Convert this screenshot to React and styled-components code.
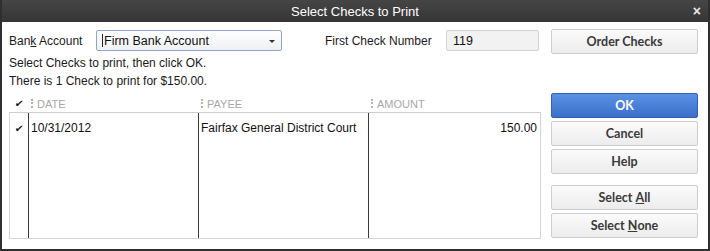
import React from "react";
import styled, { createGlobalStyle } from "styled-components";

const GlobalStyle = createGlobalStyle`
  html, body {
    margin: 0;
    padding: 0;
    background: #ffffff;
  }
  * {
    box-sizing: border-box;
  }
`;

const rows = [
  { checked: true, date: "10/31/2012", payee: "Fairfax General District Court", amount: "150.00" },
];

const App = () => {
  return (
    <>
      <GlobalStyle />
      <Window>
        <TitleBar>
          <span>Select Checks to Print</span>
          <Close>×</Close>
        </TitleBar>
        <Body>
          <Main>
            <FieldRow>
              <Label $width={87}>
                Ban<u>k</u> Account
              </Label>
              <Combo>
                <Caret />
                <span>Firm Bank Account</span>
                <Arrow />
              </Combo>
              <Label $width={121} $indent={43}>
                First Check Number
              </Label>
              <NumberBox>119</NumberBox>
            </FieldRow>
            <Info>
              <div>Select Checks to print, then click OK.</div>
              <div>There is 1 Check to print for $150.00.</div>
            </Info>
            <Table>
              <HeadRow>
                <HeadCell $center>
                  <Tick>✔</Tick>
                </HeadCell>
                <HeadCell>
                  <Dots />
                  DATE
                </HeadCell>
                <HeadCell>
                  <Dots />
                  PAYEE
                </HeadCell>
                <HeadCell>
                  <Dots />
                  AMOUNT
                </HeadCell>
              </HeadRow>
              <Grid>
                <Column>
                  {rows.map((r, i) => (
                    <Cell key={i} $center>
                      {r.checked ? <Tick>✔</Tick> : null}
                    </Cell>
                  ))}
                </Column>
                <Column>
                  {rows.map((r, i) => (
                    <Cell key={i}>{r.date}</Cell>
                  ))}
                </Column>
                <Column>
                  {rows.map((r, i) => (
                    <Cell key={i}>{r.payee}</Cell>
                  ))}
                </Column>
                <Column $last>
                  {rows.map((r, i) => (
                    <Cell key={i} $right>
                      {r.amount}
                    </Cell>
                  ))}
                </Column>
              </Grid>
            </Table>
          </Main>
          <Side>
            <Button $top={7}>Order Checks</Button>
            <Button $top={36} $primary>
              OK
            </Button>
            <Button>Cancel</Button>
            <Button>Help</Button>
            <Button $top={8}>
              Select <u>A</u>ll
            </Button>
            <Button>
              Select <u>N</u>one
            </Button>
          </Side>
        </Body>
      </Window>
    </>
  );
};

export default App;

const Window = styled.div`
  width: 710px;
  height: 251px;
  border: 2px solid #2f2f2f;
  border-top: none;
  background: #ffffff;
  display: flex;
  flex-direction: column;
  font-family: "Liberation Sans", Arial, sans-serif;
  font-size: 12px;
  color: #111;
  overflow: hidden;
`;

const TitleBar = styled.div`
  height: 22px;
  margin: 0 -2px;
  background: linear-gradient(#454545, #353535);
  color: #ffffff;
  font-size: 13px;
  display: flex;
  align-items: center;
  justify-content: center;
  position: relative;
  flex-shrink: 0;
`;

const Close = styled.span`
  position: absolute;
  right: 9px;
  top: 3px;
  font-size: 14px;
  font-weight: bold;
  color: #e8e8e8;
`;

const Body = styled.div`
  flex: 1;
  display: grid;
  grid-template-columns: 532px 147px;
  column-gap: 10px;
  padding: 0 8px 0 7px;
`;

const Main = styled.div`
  display: flex;
  flex-direction: column;
  padding-top: 8px;
`;

const FieldRow = styled.div`
  display: flex;
  align-items: center;
  height: 21px;
`;

const Label = styled.div`
  width: ${(p) => p.$width}px;
  margin-left: ${(p) => p.$indent || 0}px;
  font-size: 12px;
  color: #1a1a1a;
  white-space: nowrap;
`;

const Combo = styled.div`
  position: relative;
  width: 186px;
  height: 21px;
  border: 1px solid #8ea6cc;
  border-radius: 2px;
  background: linear-gradient(#ffffff, #eef0f3);
  display: flex;
  align-items: center;
  padding-left: 5px;
  font-size: 12.5px;
`;

const Caret = styled.span`
  width: 1px;
  height: 13px;
  background: #222;
  margin-right: 1px;
`;

const Arrow = styled.span`
  position: absolute;
  right: 6px;
  top: 9px;
  border-left: 3px solid transparent;
  border-right: 3px solid transparent;
  border-top: 3px solid #333;
`;

const NumberBox = styled.div`
  width: 93px;
  height: 21px;
  border: 1px solid #d2d2d2;
  border-radius: 2px;
  background: #f2f2f2;
  padding-left: 6px;
  display: flex;
  align-items: center;
  font-size: 12.5px;
`;

const Info = styled.div`
  margin-top: 3px;
  line-height: 18px;
  font-size: 12px;
  color: #1a1a1a;
`;

const Table = styled.div`
  margin-top: 3px;
  display: flex;
  flex-direction: column;
`;

const HeadRow = styled.div`
  display: grid;
  grid-template-columns: 20px 170px 170px 1fr;
  height: 20px;
  padding-top: 2px;
  border-bottom: 1px solid #cfcfcf;
`;

const HeadCell = styled.div`
  display: flex;
  align-items: center;
  justify-content: ${(p) => (p.$center ? "center" : "flex-start")};
  font-size: 11px;
  color: #a8a8a8;
  padding-left: ${(p) => (p.$center ? "0" : "2px")};
`;

const Dots = styled.span`
  width: 0;
  height: 9px;
  border-left: 2px dotted #b4b4b4;
  margin-right: 4px;
`;

const Tick = styled.span`
  color: #111;
  font-family: "DejaVu Sans", sans-serif;
  font-size: 10px;
  transform: skewX(-8deg);
`;

const Grid = styled.div`
  display: grid;
  grid-template-columns: 19px 170px 170px 1fr;
  height: 126px;
  border-left: 1px solid #d4d4d4;
  border-right: 1px solid #d4d4d4;
  border-bottom: 1px solid #d4d4d4;
`;

const Column = styled.div`
  border-right: ${(p) => (p.$last ? "none" : "1px solid #3c3c3c")};
  display: flex;
  flex-direction: column;
`;

const Cell = styled.div`
  height: 22px;
  padding: 8px ${(p) => (p.$right ? "3px" : "2px")} 0;
  display: flex;
  align-items: center;
  justify-content: ${(p) => (p.$center ? "center" : p.$right ? "flex-end" : "flex-start")};
  font-size: 12px;
  color: #111;
`;

const Side = styled.div`
  display: flex;
  flex-direction: column;
  gap: 3px;
`;

const Button = styled.div`
  height: 25px;
  flex-shrink: 0;
  margin-top: ${(p) => p.$top || 0}px;
  border: 1px solid ${(p) => (p.$primary ? "#2f62bb" : "#cdcdcd")};
  border-radius: 2px;
  background: ${(p) =>
    p.$primary
      ? "linear-gradient(#5b91e3, #3b6fcb)"
      : "linear-gradient(#fbfbfb, #ececec)"};
  color: ${(p) => (p.$primary ? "#ffffff" : "#3a3a3a")};
  font-family: Lato, "Open Sans", sans-serif;
  font-weight: bold;
  font-size: 12.5px;
  display: flex;
  align-items: center;
  justify-content: center;
  white-space: pre;
`;
